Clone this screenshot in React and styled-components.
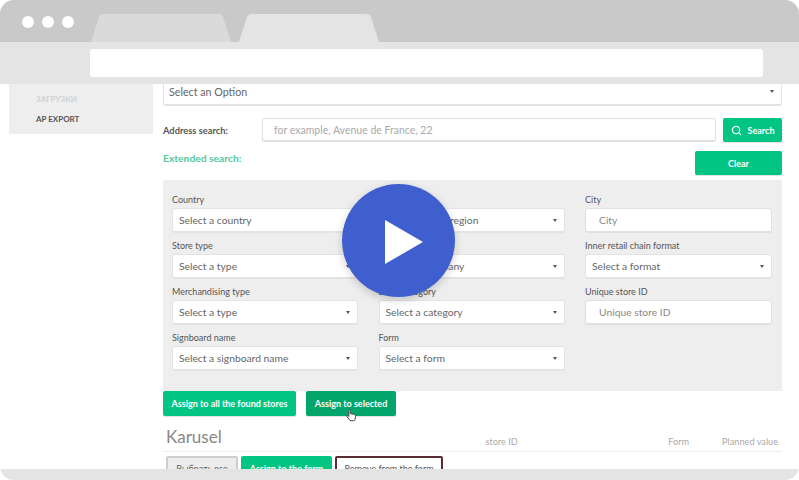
import React from 'react';
import styled, { createGlobalStyle } from 'styled-components';
import { Search } from 'lucide-react';

const Global = createGlobalStyle`
  html, body {
    margin: 0;
    background: #fff;
    font-family: Lato, "Open Sans", sans-serif;
  }
  * { box-sizing: border-box; }
`;

const Frame = styled.div`
  position: relative;
  width: 799px;
  height: 480px;
  display: flex;
  flex-direction: column;
  overflow: hidden;
  border-radius: 14px;
  background: #fff;
`;

const Chrome = styled.div`
  position: relative;
  z-index: 2;
  flex: none;
`;

const TabBar = styled.div`
  height: 42px;
  background: #c9c9c9;
  display: flex;
  align-items: flex-end;
  padding-left: 22px;
`;

const Dots = styled.div`
  display: flex;
  gap: 8px;
  align-self: flex-start;
  margin-top: 16px;
  margin-right: 17px;
`;

const Dot = styled.span`
  width: 12px;
  height: 12px;
  border-radius: 50%;
  background: #fff;
`;

const Tab = styled.div`
  height: 28px;
  width: 140px;
  margin-right: 8px;
  background: ${p => (p.$active ? '#e4e4e4' : '#dadada')};
  clip-path: path('M0 28 L8 3 Q9 0 13 0 L127 0 Q131 0 132 3 L140 28 Z');
`;

const Toolbar = styled.div`
  height: 42px;
  background: #e4e4e4;
  padding: 7px 36px 7px 90px;
`;

const AddressBar = styled.div`
  height: 28px;
  background: #fff;
  border-radius: 3px;
`;

const Content = styled.div`
  flex: 1;
  min-height: 0;
  display: flex;
  align-items: flex-start;
  padding-left: 9px;
  overflow: hidden;
`;

const Sidebar = styled.div`
  width: 144px;
  height: 50px;
  flex: none;
  background: #eeeeee;
  padding: 9px 0 0 27px;
`;

const NavItem = styled.div`
  font-size: 8px;
  font-weight: 700;
  line-height: 12px;
  height: 20px;
  color: ${p => (p.$dim ? '#d2d2d2' : '#555')};
`;

const Main = styled.div`
  width: 619px;
  margin-left: 10px;
  margin-top: -7px;
  flex: none;
`;

const Select = styled.div`
  height: ${p => p.$h}px;
  border: 1px solid #e3e3e3;
  border-bottom-width: 2px;
  border-radius: 3px;
  background: #fff;
  padding: ${p => p.$top || 0}px 6px 0 ${p => p.$left || 6}px;
  display: flex;
  align-items: center;
  justify-content: space-between;
  font-size: ${p => p.$fs}px;
  color: #666;
`;

const Caret = styled.span`
  width: 0;
  height: 0;
  border-left: 2.5px solid transparent;
  border-right: 2.5px solid transparent;
  border-top: 3.5px solid #555;
  margin-right: 1px;
`;

const AddressRow = styled.div`
  display: flex;
  align-items: center;
  margin-top: 12px;
  height: 24px;
`;

const BoldLabel = styled.div`
  width: 99px;
  font-size: 9.3px;
  font-weight: 700;
  color: #555;
`;

const TextField = styled.div`
  flex: ${p => (p.$inForm ? 'none' : 1)};
  height: ${p => (p.$inForm ? 25 : 24)}px;
  border: 1px solid #e0e0e0;
  border-bottom-width: 2px;
  border-radius: 3px;
  background: #fff;
  padding-left: ${p => (p.$inForm ? 13 : 11)}px;
  display: flex;
  align-items: center;
  font-size: ${p => (p.$inForm ? 10.3 : 10.5)}px;
  color: ${p => (p.$inForm ? '#888' : '#aaa')};
`;

const GreenButton = styled.div`
  flex: none;
  width: ${p => p.$w}px;
  height: ${p => p.$h || 24}px;
  margin-left: ${p => p.$ml || 0}px;
  background: ${p => (p.$dark ? '#02a56c' : '#03c583')};
  border-radius: 2px;
  color: #fff;
  font-size: 9px;
  font-weight: 700;
  display: flex;
  align-items: center;
  justify-content: center;
  gap: 6px;
  box-shadow: 0 1px 1px rgba(0, 0, 0, 0.12);
`;

const ExtendedRow = styled.div`
  display: flex;
  align-items: flex-start;
  justify-content: space-between;
  margin-top: 9px;
  height: 29px;
`;

const ExtendedLabel = styled.div`
  font-size: 10.3px;
  font-weight: 700;
  margin-top: 1px;
  color: #55c99a;
`;

const Filters = styled.div`
  background: #eeeeee;
  padding: 13px 9px 0 9px;
  height: 211px;
  display: grid;
  grid-template-columns: 186px 186px 187px;
  column-gap: 20.5px;
  grid-auto-rows: 46px;
`;

const Field = styled.div`
  display: flex;
  flex-direction: column;
`;

const FieldLabel = styled.div`
  height: 15px;
  font-size: 9px;
  line-height: 13px;
  color: #555;
`;

const AssignRow = styled.div`
  display: flex;
`;

const KaruselRow = styled.div`
  display: flex;
  align-items: flex-end;
  height: 27px;
  margin-top: 9px;
  padding: 0 2px 4px 3px;
  border-bottom: 1px solid #eeeeee;
  color: #aaa;
  font-size: 9.2px;
`;

const Title = styled.div`
  font-size: 17px;
  line-height: 20px;
  color: #888;
  width: 320px;
`;

const Column = styled.div`
  width: ${p => p.$w}px;
`;

const ActionRow = styled.div`
  display: flex;
  gap: 3px;
  margin-top: 4px;
  padding-left: 3px;
`;

const GreyAction = styled.div`
  width: 72px;
  height: 24px;
  padding-top: 5px;
  text-align: center;
  background: #ececec;
  border: 2px solid #cdcdcd;
  border-radius: 2px;
  font-size: 9px;
  color: #666;
`;

const GreenAction = styled.div`
  width: 91px;
  height: 24px;
  padding-top: 7px;
  text-align: center;
  background: #03c583;
  border-radius: 2px;
  font-size: 9px;
  font-weight: 700;
  color: #fff;
`;

const OutlineAction = styled.div`
  width: 108px;
  height: 24px;
  padding-top: 5px;
  text-align: center;
  background: #fff;
  border: 2px solid #5b2b33;
  border-radius: 2px;
  font-size: 9px;
  color: #555;
`;

const BottomBar = styled.div`
  position: relative;
  z-index: 2;
  flex: none;
  height: 11px;
  background: #e4e4e4;
`;

const PlayButton = styled.div`
  position: absolute;
  z-index: 3;
  left: 342px;
  top: 184px;
  width: 113px;
  height: 113px;
  border-radius: 50%;
  background: #3f5fcf;
  box-shadow: 0 3px 8px rgba(0, 0, 0, 0.18);
  display: flex;
  align-items: center;
  justify-content: center;
`;

const PlayIcon = styled.svg`
  margin: 2px 0 0 10px;
`;

const Pointer = styled.svg`
  position: absolute;
  z-index: 1;
  left: 346px;
  top: 408px;
`;

const fields = [
  { label: 'Country', value: 'Select a country', select: true },
  { label: 'State/region', value: 'Select a state/region', select: true },
  { label: 'City', value: 'City' },
  { label: 'Store type', value: 'Select a type', select: true },
  { label: 'Company', value: 'Select a company', select: true },
  { label: 'Inner retail chain format', value: 'Select a format', select: true },
  { label: 'Merchandising type', value: 'Select a type', select: true },
  { label: 'Store category', value: 'Select a category', select: true },
  { label: 'Unique store ID', value: 'Unique store ID' },
  { label: 'Signboard name', value: 'Select a signboard name', select: true },
  { label: 'Form', value: 'Select a form', select: true },
];

const App = () => (
  <Frame>
    <Global />
    <Chrome>
      <TabBar>
        <Dots>
          <Dot />
          <Dot />
          <Dot />
        </Dots>
        <Tab />
        <Tab $active />
      </TabBar>
      <Toolbar>
        <AddressBar />
      </Toolbar>
    </Chrome>
    <Content>
      <Sidebar>
        <NavItem $dim>ЗАГРУЗКИ</NavItem>
        <NavItem>AP EXPORT</NavItem>
      </Sidebar>
      <Main>
        <Select $h={29} $fs={10.7} $top={1} $left={5}>
          Select an Option
          <Caret />
        </Select>
        <AddressRow>
          <BoldLabel>Address search:</BoldLabel>
          <TextField>for example, Avenue de France, 22</TextField>
          <GreenButton $w={59} $ml={7}>
            <Search size={11} strokeWidth={2.5} />
            Search
          </GreenButton>
        </AddressRow>
        <ExtendedRow>
          <ExtendedLabel>Extended search:</ExtendedLabel>
          <GreenButton $w={87}>Clear</GreenButton>
        </ExtendedRow>
        <Filters>
          {fields.map(f => (
            <Field key={f.label}>
              <FieldLabel>{f.label}</FieldLabel>
              {f.select ? (
                <Select $h={25} $fs={10.3}>
                  {f.value}
                  <Caret />
                </Select>
              ) : (
                <TextField $inForm>{f.value}</TextField>
              )}
            </Field>
          ))}
        </Filters>
        <AssignRow>
          <GreenButton $w={133} $h={25}>Assign to all the found stores</GreenButton>
          <GreenButton $w={90} $h={25} $ml={10} $dark>Assign to selected</GreenButton>
        </AssignRow>
        <KaruselRow>
          <Title>Karusel</Title>
          <Column $w={183}>store ID</Column>
          <Column $w={54}>Form</Column>
          <Column $w={58}>Planned value</Column>
        </KaruselRow>
        <ActionRow>
          <GreyAction>Выбрать все</GreyAction>
          <GreenAction>Assign to the form</GreenAction>
          <OutlineAction>Remove from the form</OutlineAction>
        </ActionRow>
      </Main>
    </Content>
    <BottomBar />
    <Pointer width="11" height="14" viewBox="0 0 11 14">
      <path
        d="M3 1.200c.8 0 1.200.5 1.200 1.200v3.200l3.600.7c1.200.3 1.800.9 1.700 2l-.4 3c-.1.9-.6 1.400-1.400 1.400H4.800c-.6 0-1-.3-1.300-.8L1 8.600c-.4-.7.4-1.400 1-.9l.8.8V2.400c0-.7 0-1.200.2-1.200z"
        fill="#fff"
        stroke="#444"
        strokeWidth="1"
      />
    </Pointer>
    <PlayButton>
      <PlayIcon width="38" height="44" viewBox="0 0 38 44">
        <path d="M0 0 L38 22 L0 44 Z" fill="#fff" />
      </PlayIcon>
    </PlayButton>
  </Frame>
);

export default App;
